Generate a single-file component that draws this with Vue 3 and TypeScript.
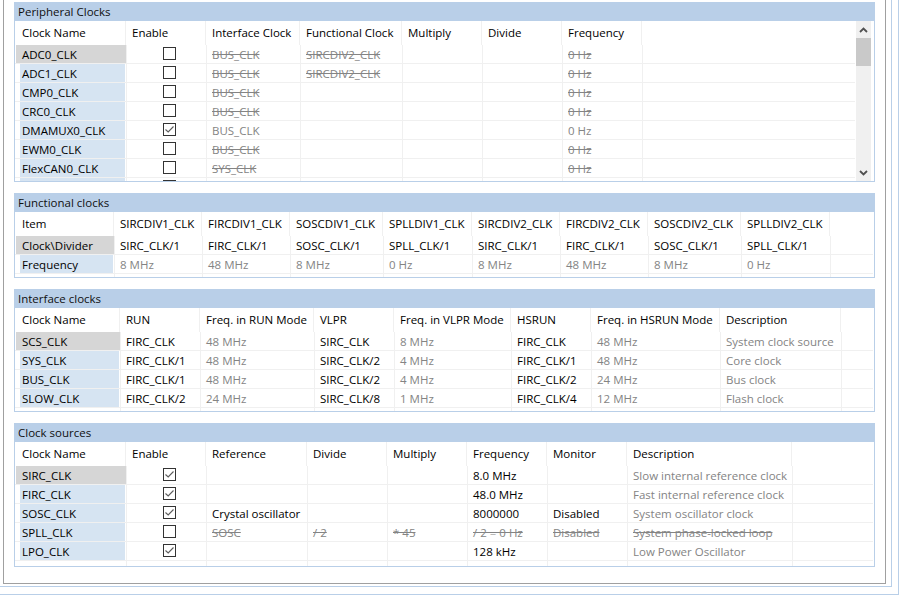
<script setup lang="ts">
type Cell = { text?: string; kind: 'plain' | 'muted' | 'off' | 'box' | 'name' | 'empty'; checked?: boolean };

interface Section {
  title: string;
  height: number;
  widths: number[];
  headers: string[];
  rows: Cell[][];
  scroll?: boolean;
}

const p = (text: string): Cell => ({ text, kind: 'plain' });
const m = (text: string): Cell => ({ text, kind: 'muted' });
const o = (text: string): Cell => ({ text, kind: 'off' });
const n = (text: string): Cell => ({ text, kind: 'name' });
const e: Cell = { kind: 'empty' };
const on: Cell = { kind: 'box', checked: true };
const no: Cell = { kind: 'box', checked: false };

const sections: Section[] = [
  {
    title: 'Peripheral Clocks',
    height: 180,
    scroll: true,
    widths: [111, 80, 94, 102, 80, 80, 80],
    headers: ['Clock Name', 'Enable', 'Interface Clock', 'Functional Clock', 'Multiply', 'Divide', 'Frequency'],
    rows: [
      [n('ADC0_CLK'), no, o('BUS_CLK'), o('SIRCDIV2_CLK'), e, e, o('0 Hz')],
      [n('ADC1_CLK'), no, o('BUS_CLK'), o('SIRCDIV2_CLK'), e, e, o('0 Hz')],
      [n('CMP0_CLK'), no, o('BUS_CLK'), e, e, e, o('0 Hz')],
      [n('CRC0_CLK'), no, o('BUS_CLK'), e, e, e, o('0 Hz')],
      [n('DMAMUX0_CLK'), on, m('BUS_CLK'), e, e, e, m('0 Hz')],
      [n('EWM0_CLK'), no, o('BUS_CLK'), e, e, e, o('0 Hz')],
      [n('FlexCAN0_CLK'), no, o('SYS_CLK'), e, e, e, o('0 Hz')],
      [n(''), no, e, e, e, e, e],
    ],
  },
  {
    title: 'Functional clocks',
    height: 85,
    widths: [99, 88, 88, 93, 89, 88, 88, 93, 89],
    headers: ['Item', 'SIRCDIV1_CLK', 'FIRCDIV1_CLK', 'SOSCDIV1_CLK', 'SPLLDIV1_CLK', 'SIRCDIV2_CLK', 'FIRCDIV2_CLK', 'SOSCDIV2_CLK', 'SPLLDIV2_CLK'],
    rows: [
      [n('Clock\\Divider'), p('SIRC_CLK/1'), p('FIRC_CLK/1'), p('SOSC_CLK/1'), p('SPLL_CLK/1'), p('SIRC_CLK/1'), p('FIRC_CLK/1'), p('SOSC_CLK/1'), p('SPLL_CLK/1')],
      [n('Frequency'), m('8 MHz'), m('48 MHz'), m('8 MHz'), m('0 Hz'), m('8 MHz'), m('48 MHz'), m('8 MHz'), m('0 Hz')],
    ],
  },
  {
    title: 'Interface clocks',
    height: 123,
    widths: [105, 80, 114, 80, 117, 80, 129, 121],
    headers: ['Clock Name', 'RUN', 'Freq. in RUN Mode', 'VLPR', 'Freq. in VLPR Mode', 'HSRUN', 'Freq. in HSRUN Mode', 'Description'],
    rows: [
      [n('SCS_CLK'), p('FIRC_CLK'), m('48 MHz'), p('SIRC_CLK'), m('8 MHz'), p('FIRC_CLK'), m('48 MHz'), m('System clock source')],
      [n('SYS_CLK'), p('FIRC_CLK/1'), m('48 MHz'), p('SIRC_CLK/2'), m('4 MHz'), p('FIRC_CLK/1'), m('48 MHz'), m('Core clock')],
      [n('BUS_CLK'), p('FIRC_CLK/1'), m('48 MHz'), p('SIRC_CLK/2'), m('4 MHz'), p('FIRC_CLK/2'), m('24 MHz'), m('Bus clock')],
      [n('SLOW_CLK'), p('FIRC_CLK/2'), m('24 MHz'), p('SIRC_CLK/8'), m('1 MHz'), p('FIRC_CLK/4'), m('12 MHz'), m('Flash clock')],
    ],
  },
  {
    title: 'Clock sources',
    height: 144,
    widths: [111, 80, 101, 80, 80, 80, 80, 165],
    headers: ['Clock Name', 'Enable', 'Reference', 'Divide', 'Multiply', 'Frequency', 'Monitor', 'Description'],
    rows: [
      [n('SIRC_CLK'), on, e, e, e, p('8.0 MHz'), e, m('Slow internal reference clock')],
      [n('FIRC_CLK'), on, e, e, e, p('48.0 MHz'), e, m('Fast internal reference clock')],
      [n('SOSC_CLK'), on, p('Crystal oscillator'), e, e, p('8000000'), p('Disabled'), m('System oscillator clock')],
      [n('SPLL_CLK'), no, o('SOSC'), o('/ 2'), o('* 45'), o('/ 2 = 0 Hz'), o('Disabled'), o('System phase-locked loop')],
      [n('LPO_CLK'), on, e, e, e, p('128 kHz'), e, m('Low Power Oscillator')],
    ],
  },
];

const headTemplate = (s: Section): string => s.widths.map((w) => `${w}px`).join(' ') + ' 1fr';
const bodyTemplate = (s: Section): string =>
  s.widths.map((w, i) => `${i === 0 ? w + 1 : w}px`).join(' ') + ' 1fr';
const blank = (s: Section): Cell[] => s.widths.map(() => e);
</script>

<template>
  <div class="frame-outer">
    <div class="frame-inner">
      <main class="panel">
        <section
          v-for="s in sections"
          :key="s.title"
          class="section"
          :style="{ height: s.height + 'px' }"
        >
          <h2 class="title">{{ s.title }}</h2>
          <div class="content">
            <div class="table" :class="{ 'table-scrolled': s.scroll }">
              <div class="head" :style="{ gridTemplateColumns: headTemplate(s) }">
                <div v-for="h in s.headers" :key="h" class="head-cell">{{ h }}</div>
              </div>
              <div
                v-for="(row, r) in [...s.rows, blank(s)]"
                :key="r"
                class="row"
                :style="{ gridTemplateColumns: bodyTemplate(s) }"
              >
                <div
                  v-for="(c, i) in row"
                  :key="i"
                  class="cell"
                  :class="{ 'cell-name': i === 0 }"
                >
                  <span
                    v-if="c.kind === 'name'"
                    class="name"
                    :class="{ 'name-active': r === 0 }"
                  >{{ c.text }}</span>
                  <span v-else-if="c.kind === 'box'" class="box">
                    <svg v-if="c.checked" width="11" height="11" viewBox="0 0 11 11">
                      <path d="M1.5 5.5 L4.2 8 L9.5 2.5" fill="none" stroke="#5c5c5c" stroke-width="1.1" />
                    </svg>
                  </span>
                  <span v-else-if="c.kind !== 'empty'" :class="c.kind">{{ c.text }}</span>
                </div>
                <div class="cell cell-fill"></div>
              </div>
            </div>
            <div v-if="s.scroll" class="scrollbar">
              <div class="arrow">
                <svg width="9" height="6" viewBox="0 0 9 6">
                  <path d="M1 5 L4.5 1.5 L8 5" fill="none" stroke="#505050" stroke-width="1.8" />
                </svg>
              </div>
              <div class="thumb"></div>
              <div class="track"></div>
              <div class="arrow">
                <svg width="9" height="6" viewBox="0 0 9 6">
                  <path d="M1 1 L4.5 4.5 L8 1" fill="none" stroke="#505050" stroke-width="1.8" />
                </svg>
              </div>
            </div>
          </div>
        </section>
      </main>
    </div>
  </div>
</template>

<style>
html,
body {
  margin: 0;
  background: #ffffff;
  overflow: hidden;
}
</style>

<style scoped>
.frame-outer {
  box-sizing: border-box;
  width: 903px;
  height: 599px;
  margin: -4px 0 0 -4px;
  border: 1px solid #b9cfe8;
  font-family: "Open Sans", "Noto Sans", sans-serif;
  font-size: 11.5px;
  color: #000000;
  display: flex;
}
.frame-inner {
  flex: 1;
  margin: 0 6px 7px 0;
  border: 1px solid #b9cfe8;
  display: flex;
}
.panel {
  flex: 1;
  margin: 0 5px 2px 5px;
  padding: 3px 10px 0;
  border: 1px solid #a0a0a0;
  display: flex;
  flex-direction: column;
  gap: 11px;
}
.section {
  box-sizing: border-box;
  flex: none;
  border: 1px solid #b9cfe8;
  border-top: 0;
  display: flex;
  flex-direction: column;
  overflow: hidden;
}
.title {
  flex: none;
  margin: 0;
  height: 19px;
  line-height: 20px;
  padding-left: 3px;
  background: #b9cfe8;
  font-size: 11.5px;
  font-weight: 400;
  color: #101010;
}
.content {
  flex: 1;
  min-height: 0;
  display: flex;
  overflow: hidden;
}
.table {
  flex: 1;
  min-width: 0;
  margin-right: 1px;
}
.table-scrolled {
  flex: none;
  width: 840px;
}
.head {
  display: grid;
  height: 24px;
}
.head-cell {
  padding-left: 6px;
  line-height: 23px;
  border-right: 1px solid #f0f0f0;
  white-space: nowrap;
}
.head-cell:first-child {
  padding-left: 7px;
}
.row {
  display: grid;
  height: 19px;
  box-sizing: border-box;
  border-bottom: 1px solid #f0f0f0;
}
.cell {
  height: 18px;
  padding-left: 5px;
  line-height: 20px;
  white-space: nowrap;
  border-right: 1px solid #f0f0f0;
  min-width: 0;
}
.cell-fill {
  border-right: 0;
}
.cell-name {
  padding-left: 0;
}
.name {
  display: block;
  height: 18px;
  margin: 0 1px 0 5px;
  padding-left: 2px;
  background: #d6e4f2;
}
.name-active {
  margin: 0 0 0 1px;
  padding-left: 6px;
  background: #d6d6d6;
}
.plain {
  color: #000000;
}
.muted {
  color: #848484;
}
.off {
  color: #848484;
  text-decoration: line-through;
}
.box {
  box-sizing: border-box;
  display: block;
  width: 13px;
  height: 13px;
  margin: 2px 0 0 31px;
  border: 1px solid #333333;
  background: #ffffff;
}
.box svg {
  display: block;
}
.scrollbar {
  flex: none;
  width: 15px;
  margin-right: 2px;
  background: #f0f0f0;
  display: flex;
  flex-direction: column;
}
.arrow {
  flex: none;
  height: 17px;
  display: flex;
  align-items: center;
  justify-content: center;
}
.thumb {
  flex: none;
  height: 28px;
  background: #c9c9c9;
}
.track {
  flex: 1;
}
</style>
